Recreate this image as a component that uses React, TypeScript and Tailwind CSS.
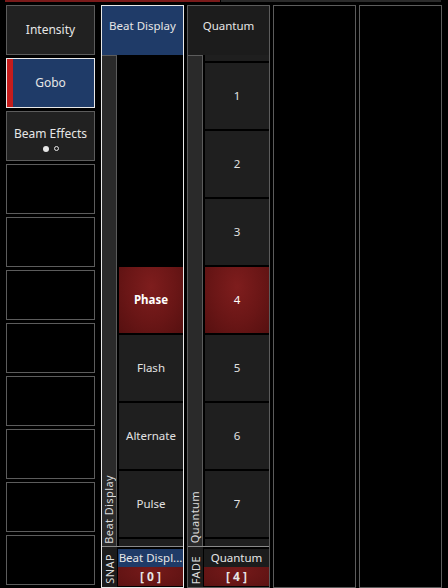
import React from "react";

const font = { fontFamily: '"Noto Sans", "Open Sans", sans-serif' };

function LeftButton({ label, variant, dots }: { label?: string; variant: "dark" | "sel" | "empty"; dots?: boolean }) {
  if (variant === "empty") {
    return <div className="h-[50px] w-[89px] box-border border border-[#5c5c5c] bg-black" />;
  }
  if (variant === "sel") {
    return (
      <div className="h-[50px] w-[89px] box-border border border-[#e8e8e8] bg-[#1f3b68] flex">
        <div className="w-[6px] bg-[#c41c1c]" />
        <div className="flex-1 flex items-center justify-center text-[12px] text-[#e6e6e6] pr-[6px]">{label}</div>
      </div>
    );
  }
  return (
    <div className="h-[50px] w-[89px] box-border border border-[#5c5c5c] bg-[#212121] flex flex-col items-center justify-center text-[12px] text-[#e6e6e6]">
      <div className={dots ? "mt-[5px] leading-[16px]" : ""}>{label}</div>
      {dots && (
        <div className="flex items-center gap-[5px] mt-[4px]">
          <div className="w-[6px] h-[6px] rounded-full bg-[#e6e6e6]" />
          <div className="w-[5px] h-[5px] rounded-full border border-[#e6e6e6]" />
        </div>
      )}
    </div>
  );
}

function Item({ label, active, bold }: { label?: string; active?: boolean; bold?: boolean }) {
  return (
    <div
      className={
        "h-[66px] shrink-0 flex items-center justify-center text-[11.5px] " +
        (active
          ? "bg-[radial-gradient(ellipse_at_50%_30%,#7e1d1d_0%,#6a1616_55%,#561010_100%)] text-white "
          : "bg-[#1f1f1f] text-[#e2e2e2] ") +
        (bold ? "font-bold" : "")
      }
    >
      {label}
    </div>
  );
}

function Vertical({ text }: { text: string }) {
  return <div className="[writing-mode:vertical-rl] rotate-180 text-[11px] leading-[14px] text-[#dcdcdc] tracking-[0.4px]">{text}</div>;
}

export default function App() {
  const leftItems: { label?: string; variant: "dark" | "sel" | "empty"; dots?: boolean }[] = [
    { label: "Intensity", variant: "dark" },
    { label: "Gobo", variant: "sel" },
    { label: "Beam Effects", variant: "dark", dots: true },
    ...Array.from({ length: 8 }, () => ({ variant: "empty" as const })),
  ];
  return (
    <div className="w-[448px] h-[588px] bg-black overflow-hidden" style={font}>
      <div className="flex h-[2px] ml-[5px] gap-[1px]">
        <div className="w-[215px] bg-[#7a1a1a]" />
        <div className="w-[220px] bg-[#2a2a2a]" />
      </div>
      <div className="flex mt-[3px] pl-[6px]">
        <div className="flex flex-col gap-[3px] w-[89px]">
          {leftItems.map((it, i) => (
            <LeftButton key={i} {...it} />
          ))}
        </div>

        {/* Beat Display column */}
        <div className="ml-[6px] w-[83px] h-[583px] box-border border border-[#e8e8e8] flex flex-col">
          <div className="h-[49px] shrink-0 bg-[#1f3b68] flex items-center justify-center pb-[9px] text-[11.5px] text-[#e6e6e6]">Beat Display</div>
          <div className="h-[491px] shrink-0 flex">
            <div className="w-[15px] shrink-0 bg-[#2a2a2a] border-t border-r border-[#5c5c5c] flex items-end justify-center pb-[2px]">
              <Vertical text="Beat Display" />
            </div>
            <div className="flex-1 overflow-hidden bg-black pl-[2px]">
              <div className="flex flex-col gap-[2px] mt-[212px]">
                <Item label="Phase" active bold />
                <Item label="Flash" />
                <Item label="Alternate" />
                <Item label="Pulse" />
                <Item />
              </div>
            </div>
          </div>
          <div className="flex-1 flex border-t border-[#8a8a8a]">
            <div className="w-[15px] shrink-0 bg-[#1c1c1c] flex items-end justify-center pb-[3px]">
              <Vertical text="SNAP" />
            </div>
            <div className="flex-1 flex flex-col pt-[2px] pl-[1px]">
              <div className="h-[18px] bg-[#1f3b68] flex items-center justify-center text-[11.5px] text-[#e6e6e6] whitespace-nowrap overflow-hidden">Beat Displ...</div>
              <div className="h-[19px] bg-[radial-gradient(ellipse_at_50%_20%,#761a1a_0%,#5c1212_100%)] flex items-center justify-center text-[12px] font-bold text-[#e6e6e6] tracking-[3px] pl-[3px]">[0]</div>
            </div>
          </div>
        </div>

        {/* Quantum column */}
        <div className="ml-[3px] w-[83px] h-[583px] box-border border border-[#5c5c5c] flex flex-col">
          <div className="h-[49px] shrink-0 bg-[#1c1c1c] flex items-center justify-center pb-[9px] text-[11.5px] text-[#e6e6e6]">Quantum</div>
          <div className="h-[491px] shrink-0 flex">
            <div className="w-[15px] shrink-0 bg-[#2a2a2a] border-t border-r border-[#5c5c5c] flex items-end justify-center pb-[3px]">
              <Vertical text="Quantum" />
            </div>
            <div className="flex-1 overflow-hidden bg-black pl-[2px]">
              <div className="flex flex-col gap-[2px] mt-[-60px]">
                <Item />
                <Item label="1" />
                <Item label="2" />
                <Item label="3" />
                <Item label="4" active />
                <Item label="5" />
                <Item label="6" />
                <Item label="7" />
                <Item />
              </div>
            </div>
          </div>
          <div className="flex-1 flex border-t border-[#8a8a8a]">
            <div className="w-[15px] shrink-0 bg-[#1c1c1c] flex items-end justify-center pb-[3px]">
              <Vertical text="FADE" />
            </div>
            <div className="flex-1 flex flex-col pt-[2px] pl-[1px]">
              <div className="h-[18px] bg-[#1c1c1c] flex items-center justify-center text-[11.5px] text-[#e6e6e6]">Quantum</div>
              <div className="h-[19px] bg-[radial-gradient(ellipse_at_50%_20%,#761a1a_0%,#5c1212_100%)] flex items-center justify-center text-[12px] font-bold text-[#e6e6e6] tracking-[3px] pl-[3px]">[4]</div>
            </div>
          </div>
        </div>

        <div className="ml-[3px] w-[83px] h-[583px] box-border border border-[#5c5c5c] bg-black" />
        <div className="ml-[3px] w-[83px] h-[583px] box-border border border-[#5c5c5c] bg-black" />
      </div>
    </div>
  );
}
